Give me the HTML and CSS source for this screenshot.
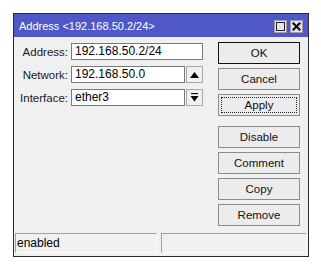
FILE: index.html
```html
<!DOCTYPE html>
<html>
<head>
<meta charset="utf-8">
<link rel="stylesheet" href="styles.css">
</head>
<body>
<div class="window">
  <div class="titlebar">
    <span class="title">Address &lt;192.168.50.2/24&gt;</span>
    <div class="tbuttons">
      <span class="tbtn"><span class="maxsq"></span></span>
      <span class="tbtn"><svg width="9" height="9" viewBox="0 0 9 9"><path d="M1.5 1.5 L7.5 7.5 M7.5 1.5 L1.5 7.5" stroke="#111" stroke-width="2.2" stroke-linecap="square"/></svg></span>
    </div>
  </div>
  <div class="body">
    <div class="main">
      <div class="form">
        <div class="row">
          <label class="lbl">Address:</label>
          <div class="field wide">192.168.50.2/24</div>
        </div>
        <div class="row">
          <label class="lbl">Network:</label>
          <div class="field narrow">192.168.50.0</div>
          <span class="arrowbtn"><svg width="9" height="6" viewBox="0 0 9 6"><path d="M0 6 L4.5 0 L9 6 Z" fill="#000"/></svg></span>
        </div>
        <div class="row">
          <label class="lbl">Interface:</label>
          <div class="field narrow">ether3</div>
          <span class="arrowbtn"><svg width="9" height="9" viewBox="0 0 9 9"><path d="M1 0.5 H8" stroke="#000" stroke-width="1.2"/><path d="M0.5 3 H8.5 L4.5 8.5 Z" fill="#000"/></svg></span>
        </div>
      </div>
      <div class="buttons">
        <button class="btn default">OK</button>
        <button class="btn">Cancel</button>
        <button class="btn focus"><span class="focusring">Apply</span></button>
        <button class="btn sep">Disable</button>
        <button class="btn">Comment</button>
        <button class="btn">Copy</button>
        <button class="btn">Remove</button>
      </div>
    </div>
    <div class="status">
      <div class="panel p1">enabled</div>
      <div class="panel p2"></div>
    </div>
  </div>
</div>
</body>
</html>
```
FILE: styles.css
```css
html, body {
  margin: 0;
  padding: 0;
  background: #ffffff;
}
body {
  font-family: "Liberation Sans", Arial, sans-serif;
  font-size: 12px;
  color: #000;
}
.window {
  margin: 13px 0 0 13px;
  width: 294px;
  height: 242px;
  border: 1px solid #2b2b2b;
  display: flex;
  flex-direction: column;
  background: #f0f0f0;
}
.titlebar {
  height: 23px;
  background: #4f58c6;
  display: flex;
  align-items: center;
  justify-content: space-between;
  padding: 0 5px 0 5px;
  flex: none;
}
.title {
  color: #fff;
  font-size: 11px;
  margin-top: 1px;
}
.tbuttons {
  display: flex;
  gap: 3px;
  margin-top: 2px;
}
.tbtn {
  width: 13px;
  height: 13px;
  box-sizing: border-box;
  background: #e4e4ea;
  border: 1px solid #9a9ab8;
  display: flex;
  align-items: center;
  justify-content: center;
}
.maxsq {
  width: 9px;
  height: 9px;
  box-sizing: border-box;
  border: 1.5px solid #222;
}
.body {
  flex: 1;
  display: flex;
  flex-direction: column;
}
.main {
  display: flex;
  justify-content: space-between;
  padding: 5px 8px 0 0;
}
.form {
  display: flex;
  flex-direction: column;
  gap: 6px;
  margin-top: 1px;
}
.row {
  display: flex;
  align-items: center;
  height: 17px;
}
.lbl {
  width: 57px;
  box-sizing: border-box;
  text-align: right;
  padding-right: 3px;
  font-size: 11.5px;
  color: #1a1a1a;
}
.field {
  height: 17px;
  box-sizing: border-box;
  background: #fff;
  border: 1px solid #7a7a7a;
  padding: 0 3px;
  line-height: 15px;
}
.wide { width: 132px; }
.narrow { width: 114px; }
.arrowbtn {
  width: 17px;
  height: 17px;
  box-sizing: border-box;
  margin-left: 1px;
  border: 1px solid #a8a8a8;
  background: #f0f0f0;
  display: flex;
  align-items: center;
  justify-content: center;
}
.buttons {
  display: flex;
  flex-direction: column;
  gap: 4px;
}
.btn {
  width: 82px;
  height: 22px;
  box-sizing: border-box;
  border: 1px solid #8c8c8c;
  background: #ececec;
  font-family: "Liberation Sans", Arial, sans-serif;
  font-size: 11.5px;
  color: #111;
  padding: 0;
  display: flex;
  align-items: center;
  justify-content: center;
}
.btn.default {
  border: 1px solid #111;
}
.btn.focus {
  padding: 2px;
}
.focusring {
  width: 100%;
  height: 100%;
  box-sizing: border-box;
  border: 1px dotted #222;
  display: flex;
  align-items: center;
  justify-content: center;
}
.btn.sep {
  margin-top: 6px;
}
.status {
  margin-top: auto;
  margin-bottom: 3px;
  display: flex;
  gap: 4px;
  padding-left: 1px;
}
.panel {
  height: 20px;
  box-sizing: border-box;
  border-top: 1px solid #a0a0a0;
  border-left: 1px solid #a0a0a0;
  border-right: 1px solid #fcfcfc;
  border-bottom: 1px solid #fcfcfc;
  padding-left: 1px;
  line-height: 18px;
}
.p1 { width: 142px; }
.p2 { width: 146px; }
```
